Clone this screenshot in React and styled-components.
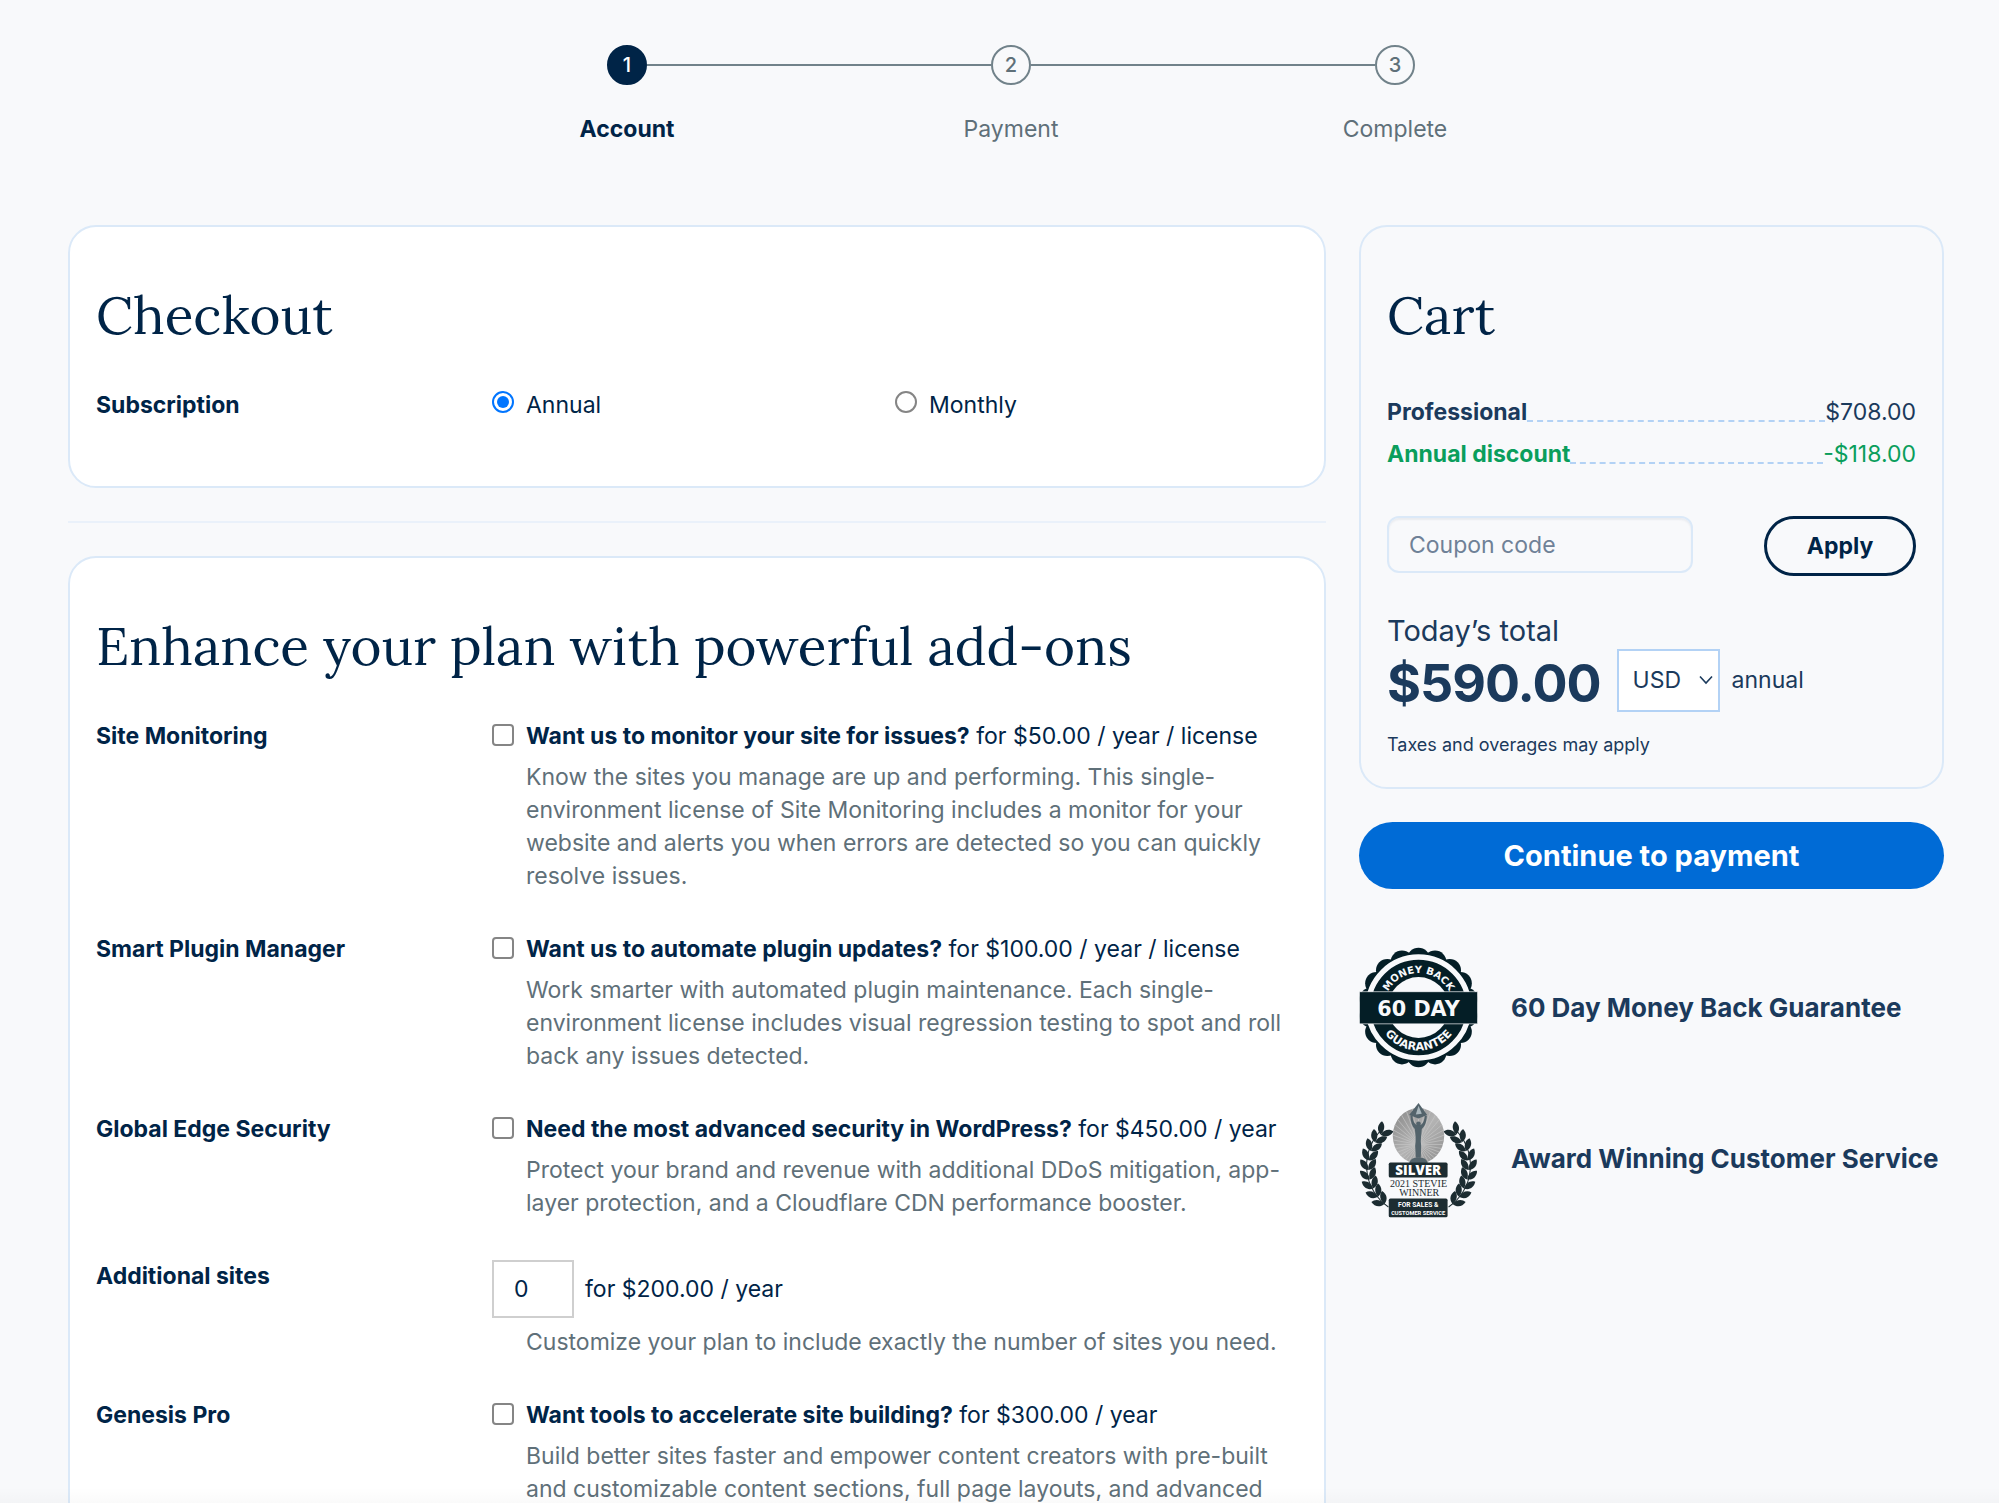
import { useState } from "react";
import styled, { createGlobalStyle } from "styled-components";

const GlobalStyle = createGlobalStyle`
*{
  box-sizing:border-box;
}
body{
  margin:0;
  background:#f8f9fb;
  color:#002447;
  font-family:Inter, "Liberation Sans", sans-serif;
  font-size:23px;
  line-height:33px;
}
h1,h2,p,ul,ol{
  margin:0;
  padding:0;
}
input,select,button{
  font:inherit;
  color:inherit;
}
`;

const Page = styled.div`
height:100vh;
overflow:hidden;
position:relative;
padding:45px 55px 0 68px;
&::after{
  content:"";
  position:absolute;
  left:0;
  right:0;
  bottom:0;
  height:16px;
  background:linear-gradient(rgba(0,0,0,0), rgba(0,0,0,0.02));
  pointer-events:none;
}
`;

/* progress */
const Steps = styled.ol`
display:flex;
justify-content:center;
list-style:none;
padding-left:10px;
`;
const Step = styled.li`
width:384px;
display:flex;
flex-direction:column;
gap:28px;
color:${(props) => (props.$current ? "#002447" : "#5f7079")};
font-weight:${(props) => (props.$current ? "700" : "400")};
text-align:center;
`;
const Track = styled.div`
display:flex;
align-items:center;
`;
const Line = styled.span`
flex:1;
height:2px;
background:${(props) => (props.$hidden ? "transparent" : "#71828a")};
`;
const Dot = styled.span`
width:40px;
height:40px;
border-radius:50%;
border:2px solid ${(props) => (props.$current ? "#002447" : "#71828a")};
background:${(props) => (props.$current ? "#002447" : "transparent")};
color:${(props) => (props.$current ? "white" : "#5f7079")};
font-size:20px;
font-weight:500;
line-height:36px;
`;

/* columns */
const Columns = styled.div`
display:grid;
grid-template-columns:minmax(0, 1fr) 585px;
gap:33px;
align-items:start;
margin-top:79px;
`;
const Card = styled.section`
border:2px solid #dbe9f8;
border-radius:28px;
background:${(props) => (props.$plain ? "transparent" : "white")};
padding:56px 26px ${(props) => props.$bottom}px;
`;
const Divider = styled.hr`
border:0;
height:2px;
background:#eaf1fa;
margin:33px 0;
`;
const Title = styled.h2`
font-family:Lora, "Liberation Serif", serif;
font-size:53px;
font-weight:400;
line-height:64px;
`;

/* form rows */
const Row = styled.div`
display:grid;
grid-template-columns:396px minmax(0, 1fr);
margin-top:${(props) => (props.$first ? "42px" : "40px")};
`;
const RowName = styled.div`
font-weight:700;
`;
const Options = styled.div`
display:grid;
grid-template-columns:1fr 1fr;
`;
const Choice = styled.label`
display:flex;
gap:12px;
`;
const Tick = styled.input`
appearance:none;
width:22px;
height:22px;
margin:4px 0 0;
flex:none;
border:2px solid #858585;
border-radius:4px;
background:white;
&:checked{
  border-color:#0075ff;
  background:#0075ff;
}
&[type="radio"]{
  margin-top:2px;
  border-radius:50%;
}
&[type="radio"]:checked{
  background:#0075ff;
  background-clip:content-box;
  padding:3px;
}
`;
const About = styled.p`
color:#5f7079;
margin-top:8px;
padding-left:34px;
`;
const Amount = styled.label`
display:flex;
align-items:center;
gap:11px;
`;
const AmountInput = styled.input`
width:82px;
height:58px;
border:2px solid #cfcfcf;
background:white;
padding:0 20px;
`;

/* cart */
const Lines = styled.ul`
list-style:none;
display:flex;
flex-direction:column;
gap:9px;
margin-top:49px;
color:#1b3a5c;
`;
const CartLine = styled.li`
display:flex;
color:${(props) => (props.$green ? "#0a9e5c" : "inherit")};
`;
const Dashes = styled.span`
flex:1;
height:26px;
border-bottom:2px dashed #b3d2f5;
`;
const Coupon = styled.form`
display:flex;
justify-content:space-between;
align-items:flex-start;
margin-top:45px;
`;
const CouponInput = styled.input`
width:306px;
height:57px;
border:2px solid #dbe9f8;
border-radius:12px;
background:transparent;
box-shadow:inset 0 2px 2px rgba(0,36,71,0.06);
padding:0 20px;
&::placeholder{
  color:#6f8197;
  opacity:1;
}
`;
const ApplyButton = styled.button`
width:152px;
height:60px;
border:3px solid #002447;
border-radius:30px;
background:transparent;
font-weight:700;
`;
const Total = styled.div`
color:#1b3a5c;
margin-top:37px;
`;
const TotalName = styled.p`
font-size:29px;
line-height:36px;
`;
const Price = styled.div`
display:flex;
align-items:center;
`;
const Sum = styled.strong`
font-size:52px;
line-height:57px;
letter-spacing:-1px;
padding-top:6px;
margin-right:16px;
`;
const SelectBox = styled.div`
position:relative;
margin-right:12px;
`;
const Currency = styled.select`
appearance:none;
display:block;
width:103px;
height:63px;
border:2px solid #b3d2f5;
border-radius:0;
background:white;
padding:0 0 0 14px;
`;
const Chevron = styled.svg`
position:absolute;
right:7px;
top:26px;
pointer-events:none;
`;
const Note = styled.p`
font-size:18px;
line-height:24px;
margin-top:21px;
`;
const PayButton = styled.button`
width:100%;
height:67px;
margin-top:33px;
border:0;
border-radius:34px;
background:#006bd6;
color:white;
font-size:29px;
font-weight:700;
`;
const Badges = styled.ul`
list-style:none;
display:flex;
flex-direction:column;
gap:31px;
margin-top:58px;
`;
const Badge = styled.li`
display:flex;
align-items:center;
gap:33px;
color:#1b3a5c;
font-size:26px;
font-weight:700;
white-space:nowrap;
`;
const Seal = styled.svg`
flex:none;
width:119px;
height:${(props) => props.$tall}px;
`;

const steps = ["Account", "Payment", "Complete"];

const addons = [
  {
    name: "Site Monitoring",
    ask: "Want us to monitor your site for issues?",
    price: "for $50.00 / year / license",
    about:
      "Know the sites you manage are up and performing. This single-environment license of Site Monitoring includes a monitor for your website and alerts you when errors are detected so you can quickly resolve issues.",
  },
  {
    name: "Smart Plugin Manager",
    ask: "Want us to automate plugin updates?",
    price: "for $100.00 / year / license",
    about:
      "Work smarter with automated plugin maintenance. Each single-environment license includes visual regression testing to spot and roll back any issues detected.",
  },
  {
    name: "Global Edge Security",
    ask: "Need the most advanced security in WordPress?",
    price: "for $450.00 / year",
    about:
      "Protect your brand and revenue with additional DDoS mitigation, app-layer protection, and a Cloudflare CDN performance booster.",
  },
  {
    name: "Additional sites",
    amount: true,
    price: "for $200.00 / year",
    about: "Customize your plan to include exactly the number of sites you need.",
  },
  {
    name: "Genesis Pro",
    ask: "Want tools to accelerate site building?",
    price: "for $300.00 / year",
    about:
      "Build better sites faster and empower content creators with pre-built and customizable content sections, full page layouts, and advanced",
  },
];

const Addon = ({ item, first }) => {
  const [count, setCount] = useState("0");
  return (
    <Row $first={first}>
      <RowName>{item.name}</RowName>
      <div>
        {item.amount ? (
          <Amount>
            <AmountInput
              type="text"
              inputMode="numeric"
              value={count}
              onChange={(e) => setCount(e.target.value)}
            />
            {item.price}
          </Amount>
        ) : (
          <Choice>
            <Tick type="checkbox" />
            <span>
              <strong>{item.ask}</strong> {item.price}
            </span>
          </Choice>
        )}
        <About>{item.about}</About>
      </div>
    </Row>
  );
};

const MoneyBackSeal = () => {
  const bumps = Array.from({ length: 18 }, (_, i) => (i * Math.PI) / 9);
  return (
    <Seal $tall={121} viewBox="24 50 356 362" aria-hidden="true">
      <defs>
        <path id="sealTop" d="M 99 231 A 103 103 0 0 1 305 231" />
        <path id="sealBottom" d="M 74 231 A 128 128 0 0 0 330 231" />
      </defs>
      <g fill="#041e26">
        {bumps.map((a) => (
          <circle key={a} cx={202 + 145 * Math.sin(a)} cy={231 - 145 * Math.cos(a)} r="34" />
        ))}
        <circle cx="202" cy="231" r="160" />
      </g>
      <circle cx="202" cy="231" r="151" fill="none" stroke="#f8f9fb" strokeWidth="16" />
      <circle cx="202" cy="231" r="91" fill="#f8f9fb" />
      <rect x="25" y="184" width="354" height="96" fill="#041e26" stroke="#f8f9fb" strokeWidth="2" />
      <g fill="#f8f9fb" fontFamily="DejaVu Sans, sans-serif" fontWeight="700" textAnchor="middle">
        <text x="202" y="255" fontSize="62">60 DAY</text>
        <text fontSize="30">
          <textPath href="#sealTop" startOffset="50%">MONEY BACK</textPath>
        </text>
        <text fontSize="34">
          <textPath href="#sealBottom" startOffset="50%">GUARANTEE</textPath>
        </text>
      </g>
    </Seal>
  );
};

const Laurel = () => {
  const leaves = Array.from({ length: 9 }, (_, i) => 134 + i * 11);
  return (
    <g fill="#1c2c31">
      <path d="M112 347 A150 150 0 0 1 96 112" fill="none" stroke="#1c2c31" strokeWidth="3" />
      {leaves.map((deg) => {
        const a = (deg * Math.PI) / 180;
        const x = 202 + 150 * Math.cos(a);
        const y = 228 + 150 * Math.sin(a);
        return (
          <g key={deg} transform={`translate(${x} ${y}) rotate(${deg + 90})`}>
            <path d="M-3 0 C-2 -17 12 -27 29 -23 C28 -8 14 2 -3 0Z" />
            <path d="M-3 0 C-2 17 12 27 29 23 C28 8 14 -2 -3 0Z" />
          </g>
        );
      })}
    </g>
  );
};

const SilverSeal = () => {
  const rays = Array.from({ length: 36 }, (_, i) => (i * Math.PI) / 18);
  return (
    <Seal $tall={119} viewBox="24 24 356 356" aria-hidden="true">
      <defs>
        <linearGradient id="medal" x1="0" y1="0" x2="1" y2="1">
          <stop offset="0" stopColor="#858585" />
          <stop offset="0.5" stopColor="#b4b4b4" />
          <stop offset="1" stopColor="#8e8e8e" />
        </linearGradient>
        <clipPath id="medalClip">
          <ellipse cx="202" cy="134" rx="77" ry="83" />
        </clipPath>
      </defs>
      <Laurel />
      <g transform="translate(404 0) scale(-1 1)">
        <Laurel />
      </g>
      <ellipse cx="202" cy="134" rx="77" ry="83" fill="url(#medal)" />
      <g clipPath="url(#medalClip)" stroke="#c6c6c6" strokeWidth="2">
        {rays.map((a) => (
          <line key={a} x1="202" y1="160" x2={202 + 140 * Math.cos(a)} y2={160 + 140 * Math.sin(a)} />
        ))}
      </g>
      <g fill="#53636b">
        <path d="M202 36 L228 72 L202 82 L174 72Z" />
        <path d="M178 74 L184 74 C185 90 190 98 197 102 L208 102 C215 98 219 90 221 74 L227 74 C226 94 221 106 212 114 C211 132 207 146 210 164 L209 200 L194 200 L192 164 C195 146 193 132 191 114 C183 106 178 92 178 74Z" />
        <circle cx="202" cy="98" r="7" />
        <path d="M174 216 C178 202 190 199 202 199 C214 199 226 202 230 216Z" />
      </g>
      <path d="M202 44 L212 68 L194 70Z" fill="#a9b6bc" />
      <rect x="113" y="214" width="176" height="45" rx="5" fill="#1c2c31" />
      <rect x="113" y="322" width="176" height="56" rx="5" fill="#1c2c31" />
      <g textAnchor="middle">
        <text x="201" y="251" fontSize="40" fontFamily="Open Sans, sans-serif" fontWeight="800" fill="white">
          SILVER
        </text>
        <g fontFamily="Liberation Serif, serif" fontSize="30" fontWeight="400" fill="#1c2c31">
          <text x="202" y="287">2021 STEVIE</text>
          <text x="204" y="314">WINNER</text>
        </g>
        <g fontFamily="Roboto, sans-serif" fontWeight="700" fill="white">
          <text x="201" y="347" fontSize="20">FOR SALES &amp;</text>
          <text x="201" y="370" fontSize="17">CUSTOMER SERVICE</text>
        </g>
      </g>
    </Seal>
  );
};

const App = () => {
  const [plan, setPlan] = useState("Annual");
  return (
    <Page>
      <GlobalStyle />
      <Steps>
        {steps.map((name, i) => (
          <Step key={name} $current={i === 0}>
            <Track>
              <Line $hidden={i === 0} />
              <Dot $current={i === 0}>{i + 1}</Dot>
              <Line $hidden={i === steps.length - 1} />
            </Track>
            {name}
          </Step>
        ))}
      </Steps>
      <Columns>
        <main>
          <Card $bottom={64}>
            <Title as="h1">Checkout</Title>
            <Row $first>
              <RowName>Subscription</RowName>
              <Options>
                {["Annual", "Monthly"].map((name) => (
                  <Choice key={name}>
                    <Tick
                      type="radio"
                      name="plan"
                      checked={plan === name}
                      onChange={() => setPlan(name)}
                    />
                    {name}
                  </Choice>
                ))}
              </Options>
            </Row>
          </Card>
          <Divider />
          <Card $bottom={60}>
            <Title>Enhance your plan with powerful add-ons</Title>
            {addons.map((item, i) => (
              <Addon key={item.name} item={item} first={i === 0} />
            ))}
          </Card>
        </main>
        <aside>
          <Card $plain $bottom={30}>
            <Title>Cart</Title>
            <Lines>
              <CartLine>
                <strong>Professional</strong>
                <Dashes />
                $708.00
              </CartLine>
              <CartLine $green>
                <strong>Annual discount</strong>
                <Dashes />
                -$118.00
              </CartLine>
            </Lines>
            <Coupon onSubmit={(e) => e.preventDefault()}>
              <CouponInput type="text" placeholder="Coupon code" aria-label="Coupon code" />
              <ApplyButton type="submit">Apply</ApplyButton>
            </Coupon>
            <Total>
              <TotalName>Today’s total</TotalName>
              <Price>
                <Sum>$590.00</Sum>
                <SelectBox>
                  <Currency aria-label="Currency" defaultValue="USD">
                    <option>USD</option>
                  </Currency>
                  <Chevron width="14" height="10" viewBox="0 0 14 10" fill="none" stroke="#1b3a5c" strokeWidth="1.6">
                    <path d="M1 1.5 L7 8 L13 1.5" />
                  </Chevron>
                </SelectBox>
                annual
              </Price>
              <Note>Taxes and overages may apply</Note>
            </Total>
          </Card>
          <PayButton type="button">Continue to payment</PayButton>
          <Badges>
            <Badge>
              <MoneyBackSeal />
              60 Day Money Back Guarantee
            </Badge>
            <Badge>
              <SilverSeal />
              Award Winning Customer Service
            </Badge>
          </Badges>
        </aside>
      </Columns>
    </Page>
  );
};

export default App;
